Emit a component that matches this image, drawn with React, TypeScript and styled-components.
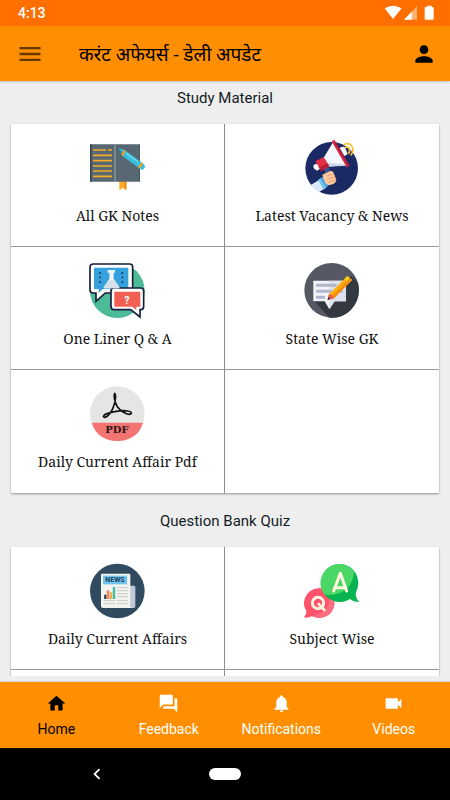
import React from "react";
import styled, { createGlobalStyle } from "styled-components";
import {
  MdChevronLeft,
  MdHome,
  MdMenu,
  MdNotifications,
  MdPerson,
  MdQuestionAnswer,
  MdVideocam,
} from "react-icons/md";

const GlobalStyle = createGlobalStyle`
  * { box-sizing: border-box; }
  body { margin: 0; }
  button { font: inherit; color: inherit; border: 0; margin: 0; padding: 0; background: none; cursor: pointer; }
`;

const Screen = styled.div`
  display: flex;
  flex-direction: column;
  height: 100vh;
  background: #eeeeee;
  color: #121c26;
  font-family: Roboto, "Noto Sans", sans-serif;
`;

const StatusBar = styled.div`
  flex: none;
  display: flex;
  align-items: center;
  justify-content: space-between;
  height: 26px;
  padding: 0 16px 0 18px;
  background: #ff6f00;
  color: #ffffff;
  font-size: 14px;
  font-weight: 500;
`;

const AppBar = styled.header`
  flex: none;
  display: flex;
  align-items: center;
  height: 55px;
  padding: 0 13px 0 16px;
  background: #ff8f00;
  color: #000000;
  box-shadow: 0 1px 2px rgba(0, 0, 0, 0.2);
  z-index: 1;
`;

const IconButton = styled.button<{ $faded?: boolean }>`
  display: flex;
  opacity: ${(p) => (p.$faded ? 0.6 : 1)};
`;

const AppTitle = styled.h1`
  flex: 1;
  margin: 0;
  padding: 2px 0 0 35px;
  font-family: Roboto, "Noto Sans Devanagari", "Noto Sans", sans-serif;
  font-size: 19px;
  font-weight: 400;
  line-height: 28px;
`;

const Content = styled.main`
  flex: 1;
  min-height: 0;
  overflow: hidden;
  margin-bottom: 6px;
  padding: 0 11px;
`;

const Section = styled.section`
  margin-bottom: 11px;
`;

const SectionTitle = styled.h2`
  margin: 0;
  padding: 7px 0 16px;
  font-size: 15px;
  font-weight: 400;
  line-height: 20px;
  text-align: center;
`;

const Card = styled.div`
  display: grid;
  grid-template-columns: 1fr 1fr;
  background: #ffffff;
  box-shadow: 0 1px 2px rgba(0, 0, 0, 0.4);
`;

const Tile = styled.button`
  display: flex;
  flex-direction: column;
  align-items: center;
  gap: 11px;
  height: 123px;
  padding-top: 15px;
  color: #111111;
  font-family: "Noto Serif", "Droid Serif", "DejaVu Serif Condensed", serif;
  font-size: 14px;
  line-height: 20px;

  &:nth-child(odd) { border-right: 1px solid #8c8c8c; }
  &:not(:nth-child(n + 5)) { border-bottom: 1px solid #999999; }
`;

const TileArt = styled.svg`
  display: block;
  width: 56px;
  height: 56px;
  overflow: visible;
`;

const BottomNav = styled.nav`
  flex: none;
  display: grid;
  grid-template-columns: repeat(4, 1fr);
  height: 66px;
  background: #ff8f00;
  box-shadow: 0 -1px 1px rgba(0, 0, 0, 0.1);
`;

const NavItem = styled.button<{ $active?: boolean }>`
  display: flex;
  flex-direction: column;
  align-items: center;
  gap: 6px;
  padding-top: 11px;
  color: ${(p) => (p.$active ? "#000000" : "#ffffff")};
  font-size: 14px;
  line-height: 18px;
`;

const SystemBar = styled.div`
  flex: none;
  display: grid;
  grid-template-columns: 1fr auto 1fr;
  align-items: center;
  height: 52px;
  background: #000000;
  color: #ffffff;
`;

const BackButton = styled.button`
  display: flex;
  justify-self: center;
  padding-right: 16px;
`;

const HomePill = styled.button`
  width: 32px;
  height: 12px;
  border-radius: 6px;
  background: #ffffff;
`;

const StatusIcons = () => (
  <svg width="50" height="16" viewBox="0 0 150 48" aria-hidden="true">
    <path d="M2 10Q27-6 53 10L27 42Z" fill="#fff" />
    <path d="M99 4V44H60Z" fill="#fff" opacity=".45" />
    <path d="M83 20V44H60Z" fill="#fff" />
    <path d="M129 2h14v4h3q3 0 3 3v32q0 3-3 3h-21q-3 0-3-3V9q0-3 3-3h4z" fill="#fff" />
  </svg>
);

const NotesArt = () => (
  <TileArt viewBox="45 27 168 168">
    <path d="M133 150h21v31l-10-8-11 8z" fill="#ffad25" />
    <path d="M148 153h6v28l-6-5z" fill="#f08c15" />
    <rect x="45" y="43" width="150" height="112" rx="2" fill="#586873" />
    <path d="M45 43h5v112h-5z" fill="#384954" />
    <path d="M117 43h6v112h-6z" fill="#7b8991" />
    <path d="M193 43h2v112h-2z" fill="#43545e" />
    <path d="M54 60h39M99 60h12M54 76h57M54 92h57M54 108h57M54 123h57M54 139h57" stroke="#f5ac28" strokeWidth="5" fill="none" />
    <path d="M131 55l17 4 57 42q8 7 3 14t-12 2l-54-39z" fill="#39bfdb" />
    <path d="M131 55l9 20 5-7z" fill="#1d91b5" />
    <path d="M147 60l5 4-9 14-5-5zM199 97l5 4-10 15-5-4z" fill="#f49d22" />
    <path d="M153 69l37 27" stroke="#72dbea" strokeWidth="4" />
  </TileArt>
);

const VacancyArt = () => (
  <TileArt viewBox="42 27 168 168">
    <circle cx="125" cy="115" r="79" fill="#1b2964" />
    <path d="M61 166l27-17 21 24-22 13q-15-8-26-20z" fill="#dce9fa" />
    <path d="M84 149l15-8 16 26-15 11z" fill="#71c5f3" />
    <path d="M91 145l8-4 16 26-8 5z" fill="#4ca5df" />
    <path d="M100 116l14-7 13 22-15 9z" fill="#3d518c" />
    <path d="M97 134l24-11q8-1 10 6l8 21q0 8-9 12l-13 4q-9-1-12-9z" fill="#ffc99c" />
    <path d="M109 139l22-8M112 148l23-8M115 157l23-8" stroke="#d78c68" strokeWidth="2" />
    <path d="M160 45q16-10 26 4 8 13-4 27M163 54q10-6 15 3 3 7-3 14" fill="none" stroke="#ffbe31" strokeWidth="5" />
    <path d="M149 54q14-9 19 5l5 14-10 5z" fill="#f6f9ff" />
    <path d="M99 87l29-49 43 67-59 5z" fill="#f5f9ff" />
    <path d="M105 98l60 4 6 5-59 3z" fill="#cddaed" />
    <path d="M76 94l25-13 17 28-25 14z" fill="#e62f43" />
    <path d="M86 113l27-13 5 9-25 14z" fill="#b51e35" />
    <path d="M71 104l10-3 8 16-8 5q-8-2-11-11z" fill="#fff" />
    <path d="M125 34l8-5 45 78-8 5z" fill="#e52b3e" />
    <path d="M132 38l4-3 42 72-5 3z" fill="#b81e39" />
  </TileArt>
);

const OneLinerArt = () => (
  <TileArt viewBox="45 21 168 168">
    <circle cx="127" cy="107" r="82" fill="#4dba98" />
    <path d="M55 27h109q9 0 9 9v69q0 9-9 9H91l-28 25v-25h-9q-9 0-9-9V36q0-9 10-9z" fill="#fff" stroke="#17203b" strokeWidth="5" />
    <path d="M57 38h103v64H83l-12 12v-12H57z" fill="#36a2dd" />
    <path d="M117 99h80q9 0 9 9v46q0 10-9 10h-2v22l-28-22h-50q-9 0-9-10v-46q0-9 9-9z" fill="#fff" stroke="#17203b" strokeWidth="5" />
    <path d="M118 110h78v45h-12v10l-12-10h-54z" fill="#f15f52" />
    <path d="M98 45h22v8h-4v19l16 23q3 5-3 5H90q-6 0-3-5l16-23V53h-5z" fill="#edf4f6" />
    <path d="M109 76h10l13 19q3 5-3 5H90q-6 0-3-5l13-19z" fill="#d5e3e8" />
    <path d="M75 52v4M75 65v4M75 79v4M142 52v4M142 65v4M142 79v4" stroke="#17203b" strokeWidth="5" />
    <text x="156" y="148" textAnchor="middle" fontFamily="Roboto, sans-serif" fontSize="32" fontWeight="700" fill="#fff">?</text>
  </TileArt>
);

const StateArt = () => (
  <TileArt viewBox="42 21 168 168">
    <circle cx="125" cy="106" r="82" fill="#565964" />
    <path d="M185 63l19 20q8 36-10 66-27 43-76 39l-46-51z" fill="#323940" />
    <path d="M70 77h98v62h-34l-16 24-14-24H70z" fill="#f2f4fa" />
    <path d="M118 77h50v62h-34l-16 24z" fill="#dce1ed" />
    <path d="M78 91h61M78 109h47M78 127h27M146 109h12" stroke="#afb5ca" strokeWidth="9" />
    <path d="M113 134l4-16 55-55 14 12-54 55z" fill="#ffac13" />
    <path d="M172 63l14 12-9 9-14-12z" fill="#ffcd22" />
    <path d="M126 124l54-55 6 6-54 55z" fill="#f48c09" />
    <path d="M113 134l4-16q11 0 15 12z" fill="#e75d4a" />
    <path d="M113 134l2-8 7 6z" fill="#202936" />
  </TileArt>
);

const PdfArt = () => (
  <TileArt viewBox="45 15 168 168">
    <circle cx="127" cy="101" r="82" fill="#e5e5e5" />
    <path d="M50 128h154q-16 53-77 55-60-2-77-55z" fill="#f37470" />
    <path d="M119 40C115 48 120 68 127 80C136 92 152 103 163 103C173 101 170 94 158 93C140 90 112 96 98 100C84 104 82 112 90 112C101 110 112 92 117 76C122 60 124 46 119 40Z" fill="none" stroke="#111" strokeWidth="5" strokeLinejoin="round" />
    <text x="126" y="159" textAnchor="middle" fontFamily="DejaVu Serif, serif" fontSize="30" fontWeight="700" fill="#271517">PDF</text>
  </TileArt>
);

const NewsArt = () => (
  <TileArt viewBox="45 21 168 168">
    <circle cx="127" cy="108" r="82" fill="#304b60" />
    <path d="M160 92h17q4 0 4 4v58q0 5-5 5h-16z" fill="#c1c8d8" />
    <path d="M80 56h83q3 0 3 4v93q0 6 6 6H84q-6 0-6-6V60q0-4 2-4z" fill="#f4f3ef" />
    <path d="M84 62h72v26H84z" fill="#6dc6f0" />
    <text x="120" y="82" textAnchor="middle" fontFamily="Roboto, sans-serif" fontSize="21" fontWeight="700" fill="#253c54">NEWS</text>
    <path d="M125 98h34M125 107h34M125 116h34M125 125h34M125 137h34M125 146h34M86 137h34M86 146h34" stroke="#c6cacb" strokeWidth="3" />
    <path d="M91 132v-13" stroke="#253c54" strokeWidth="7" />
    <path d="M99 132v-26" stroke="#f58560" strokeWidth="8" />
    <path d="M108 132v-20" stroke="#f4ad55" strokeWidth="8" />
    <path d="M117 132V96" stroke="#3abfaa" strokeWidth="7" />
  </TileArt>
);

const SubjectArt = () => (
  <TileArt viewBox="42 21 168 168">
    <path d="M89 99a45 45 0 1 1-23 84q-12 7-24 4 8-9 7-20Q38 151 44 131q10-30 45-32z" fill="#ff536d" />
    <path d="M89 99q38 2 44 36 2 27-18 43-24 18-49 5 43-8 51-39 6-29-28-45z" fill="#ff6f82" />
    <circle cx="84" cy="144" r="17" fill="none" stroke="#fff4df" strokeWidth="9" />
    <path d="M86 147l17 18" stroke="#fff4df" strokeWidth="8" strokeLinecap="round" />
    <path d="M149 27a57 57 0 0 1 49 84q-4 13 9 30-16 1-27-9a57 57 0 1 1-31-105z" fill="#08b450" />
    <path d="M149 27q29 2 43 22-3 49-43 65-25 10-46 4-20-28-6-58 16-32 52-33z" fill="#4bd765" />
    <path d="M131 108l20-53 19 53M134 98h33" fill="none" stroke="#fff6df" strokeWidth="9" strokeLinecap="round" strokeLinejoin="round" />
  </TileArt>
);

const sections = [
  {
    title: "Study Material",
    tiles: [
      { label: "All GK Notes", Art: NotesArt },
      { label: "Latest Vacancy & News", Art: VacancyArt },
      { label: "One Liner Q & A", Art: OneLinerArt },
      { label: "State Wise GK", Art: StateArt },
      { label: "Daily Current Affair Pdf", Art: PdfArt },
    ],
  },
  {
    title: "Question Bank Quiz",
    tiles: [
      { label: "Daily Current Affairs", Art: NewsArt },
      { label: "Subject Wise", Art: SubjectArt },
    ],
  },
];

const navItems = [
  { label: "Home", Icon: MdHome },
  { label: "Feedback", Icon: MdQuestionAnswer },
  { label: "Notifications", Icon: MdNotifications },
  { label: "Videos", Icon: MdVideocam },
];

const NextRow = styled.div`
  height: 123px;

  &:nth-child(odd) { border-right: 1px solid #8c8c8c; }
`;

export default function App() {
  return (
    <Screen>
      <GlobalStyle />
      <StatusBar>
        <span>4:13</span>
        <StatusIcons />
      </StatusBar>
      <AppBar>
        <IconButton $faded aria-label="Menu"><MdMenu size={28} /></IconButton>
        <AppTitle lang="hi">करंट अफेयर्स - डेली अपडेट</AppTitle>
        <IconButton aria-label="Profile"><MdPerson size={26} /></IconButton>
      </AppBar>
      <Content>
        {sections.map(({ title, tiles }, index) => (
          <Section key={title}>
            <SectionTitle>{title}</SectionTitle>
            <Card>
              {tiles.map(({ label, Art }) => (
                <Tile key={label}>
                  <Art />
                  <span>{label}</span>
                </Tile>
              ))}
              {index === 1 && (
                <>
                  <NextRow />
                  <NextRow />
                </>
              )}
            </Card>
          </Section>
        ))}
      </Content>
      <BottomNav>
        {navItems.map(({ label, Icon }, index) => (
          <NavItem key={label} $active={index === 0} aria-current={index === 0 ? "page" : undefined}>
            <Icon size={21} />
            <span>{label}</span>
          </NavItem>
        ))}
      </BottomNav>
      <SystemBar>
        <BackButton aria-label="Back"><MdChevronLeft size={22} /></BackButton>
        <HomePill aria-label="Home screen" />
      </SystemBar>
    </Screen>
  );
}
